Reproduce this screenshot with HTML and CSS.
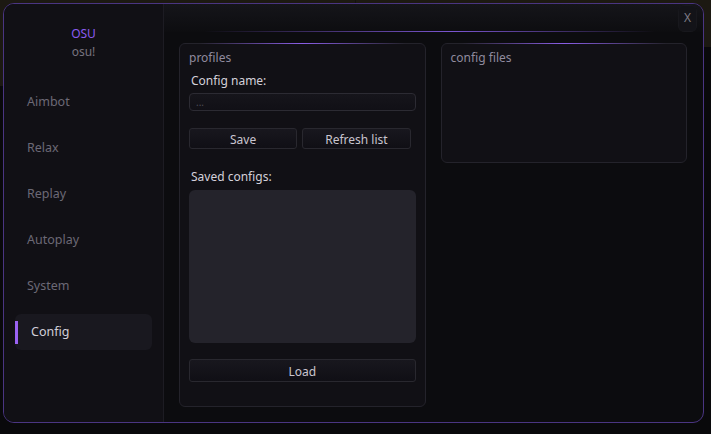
FILE: index.html
```html
<!DOCTYPE html>
<html>

<head>
    <title>OSU</title>
    <meta name='viewport' content='width=device-width'>
    <link rel="stylesheet" href="styles.css">
</head>

<body>
    <div class="window">
        <div class="sidebar">
            <div class="brand">
                <div class="brand-name">OSU</div>
                <div class="brand-sub">osu!</div>
            </div>
            <div class="nav">
                <div class="nav-item">Aimbot</div>
                <div class="nav-item">Relax</div>
                <div class="nav-item">Replay</div>
                <div class="nav-item">Autoplay</div>
                <div class="nav-item">System</div>
                <div class="nav-item active">Config</div>
            </div>
        </div>
        <div class="main">
            <div class="header">
                <div class="close">X</div>
            </div>
            <div class="content">
                <div class="panel profiles">
                    <div class="panel-title">profiles</div>
                    <div class="label">Config name:</div>
                    <input class="field" type="text" placeholder="...">
                    <div class="btn-row">
                        <div class="btn">Save</div>
                        <div class="btn">Refresh list</div>
                    </div>
                    <div class="label saved">Saved configs:</div>
                    <div class="listbox"></div>
                    <div class="btn wide">Load</div>
                </div>
                <div class="panel files">
                    <div class="panel-title">config files</div>
                </div>
            </div>
        </div>
    </div>
</body>

</html>
```

FILE: styles.css
```css
body {
    margin: 0;
    height: 434px;
    font-family: "Noto Sans", "Open Sans", sans-serif;
    font-size: 12px;
    background:
        linear-gradient(#1c1912, #1c1912) left top / 50% 86px no-repeat,
        linear-gradient(#1c1912, #1c1912) right top / 50% 47px no-repeat,
        #09090b;
    padding: 3px;
    box-sizing: border-box;
    overflow: hidden;
}

.window {
    width: 701px;
    height: 420px;
    box-sizing: border-box;
    border: 1px solid #4a3582;
    border-radius: 11px;
    display: flex;
    overflow: hidden;
    background: #0c0c0f;
}

/* left menu */
.sidebar {
    width: 159px;
    background: #111015;
    border-right: 1px solid #1d1c23;
    display: flex;
    flex-direction: column;
}

.brand {
    text-align: center;
    padding-top: 21px;
    line-height: 18px;
}

.brand-name {
    color: #8b5cf0;
}

.brand-sub {
    color: #77737f;
}

.nav {
    margin-top: 23px;
    padding: 0 11px;
    display: flex;
    flex-direction: column;
    gap: 10px;
}

.nav-item {
    height: 36px;
    line-height: 36px;
    padding-left: 12px;
    color: #6c6976;
    font-size: 12.5px;
    border-radius: 6px;
    position: relative;
}

.nav-item.active {
    background: #19181f;
    color: #d2cfd9;
    padding-left: 16px;
}

.nav-item.active::before {
    content: '';
    position: absolute;
    left: 0;
    top: 7px;
    width: 3px;
    height: 23px;
    background: #9a62f2;
}

/* right side */
.main {
    flex: 1;
    display: flex;
    flex-direction: column;
}

.header {
    height: 28px;
    position: relative;
    background: linear-gradient(#15151a, #0d0d10);
    display: flex;
    justify-content: flex-end;
    padding-right: 6px;
}

.header::after {
    content: '';
    position: absolute;
    left: 40px;
    right: 48px;
    bottom: 0;
    height: 1px;
    background: linear-gradient(90deg, transparent, #7a55d0 55%, transparent);
}

.close {
    width: 19px;
    height: 27px;
    margin-top: 1px;
    border-radius: 6px;
    background: #131318;
    border: 1px solid #18181d;
    box-sizing: border-box;
    color: #7e7b86;
    text-align: center;
    line-height: 24px;
    font-size: 12px;
}

.content {
    display: flex;
    gap: 15px;
    padding: 11px 16px 0 15px;
    align-items: flex-start;
}

.panel {
    flex: 1;
    box-sizing: border-box;
    border: 1px solid #24232b;
    border-radius: 6px;
    background: #111015;
    position: relative;
    padding: 5px 9px 0 9px;
}

.panel::before {
    content: '';
    position: absolute;
    left: 20px;
    right: 20px;
    top: -1px;
    height: 1px;
    background: linear-gradient(90deg, transparent, #8a5ee6, transparent);
}

.profiles {
    height: 364px;
    display: flex;
    flex-direction: column;
}

.files {
    height: 120px;
}

.panel-title {
    color: #8f8a9e;
    line-height: 18px;
}

.label {
    color: #d4d1da;
    line-height: 18px;
    padding-left: 2px;
    margin-top: 5px;
}

.field {
    margin: 3px 0 0;
    height: 18px;
    box-sizing: border-box;
    border: 1px solid #2c2b33;
    border-radius: 4px;
    background: linear-gradient(#16151b, #111016);
    color: #cfcbd5;
    font: inherit;
    font-size: 10px;
    padding: 0 6px;
    outline: none;
}

.field::placeholder {
    color: #4f4d56;
}

.btn-row {
    display: flex;
    gap: 5px;
    margin-top: 17px;
    padding-right: 5px;
}

.btn {
    flex: 1;
    height: 21px;
    box-sizing: border-box;
    border: 1px solid #29282f;
    border-radius: 3px;
    background: linear-gradient(#18171e, #100f15);
    color: #c9c5cf;
    text-align: center;
    line-height: 21px;
}

.saved {
    margin-top: 19px;
}

.listbox {
    margin-top: 4px;
    height: 153px;
    border-radius: 6px;
    background: #24232b;
}

.btn.wide {
    flex: none;
    height: 23px;
    line-height: 23px;
    margin-top: 16px;
}
```
